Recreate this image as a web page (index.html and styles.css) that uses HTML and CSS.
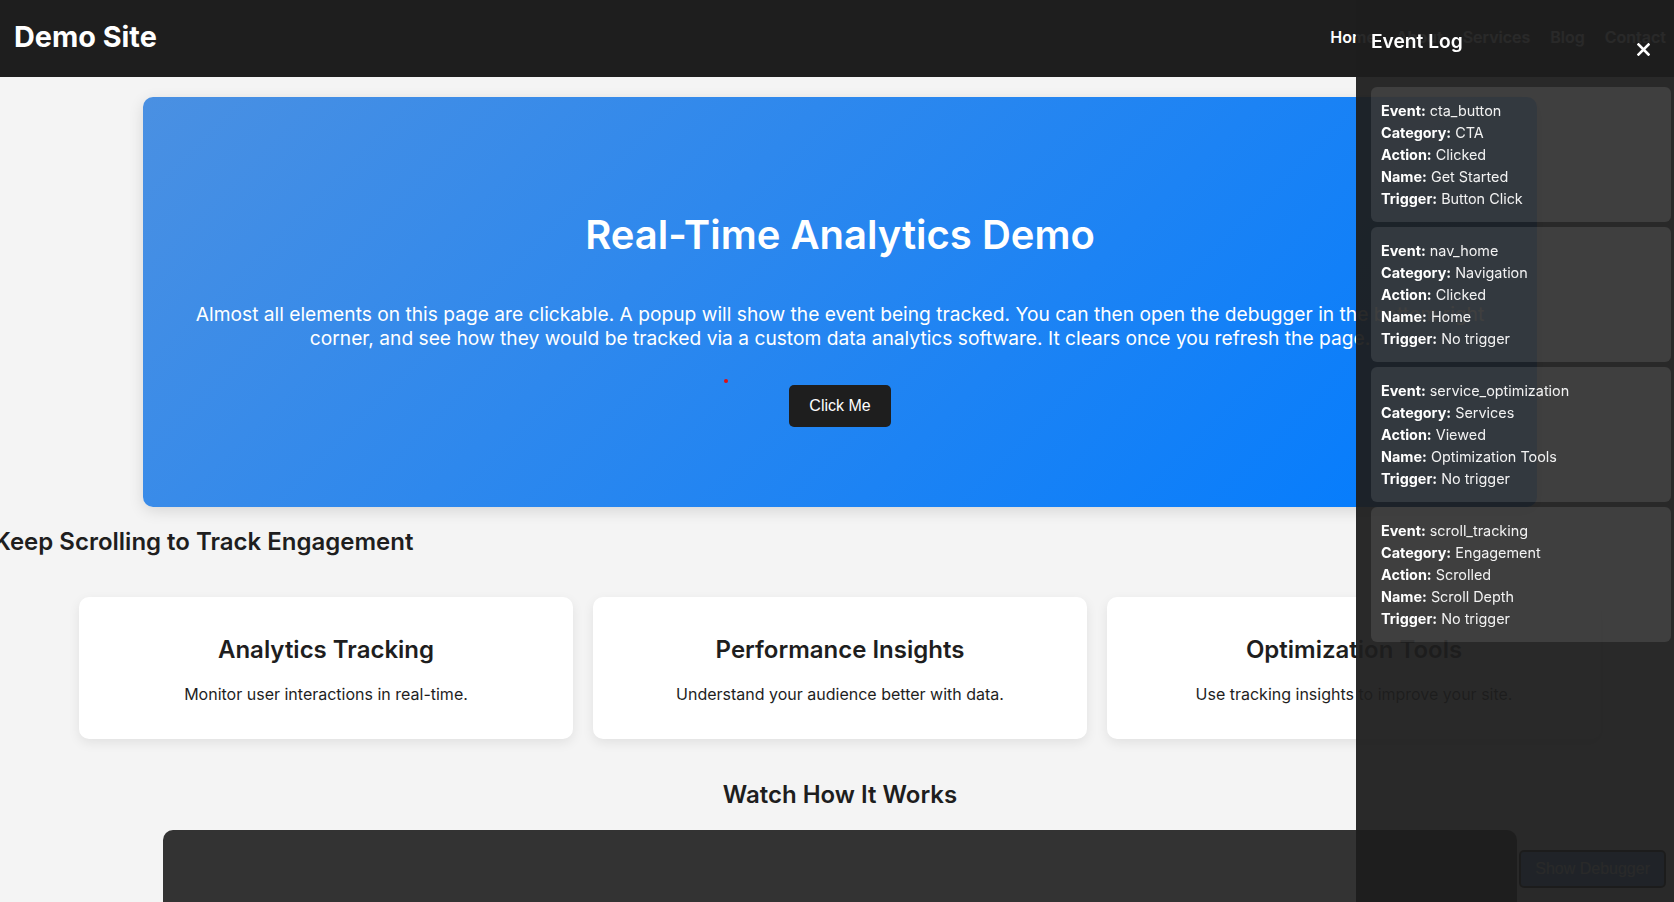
FILE: index.html
```html
<!DOCTYPE html>
<html lang="en">
<head>
<meta charset="utf-8">
<title>Demo Site</title>
<link rel="stylesheet" href="styles.css">
</head>
<body>
<div class="page">
  <header class="site-header">
    <div class="logo">Demo Site</div>
    <nav class="nav">
      <a href="#">Home</a>
      <a href="#">About</a>
      <a href="#">Services</a>
      <a href="#">Blog</a>
      <a href="#">Contact</a>
    </nav>
  </header>
  <main>
    <section class="hero">
      <h1>Real-Time Analytics Demo</h1>
      <p>Almost all elements on this page are clickable. A popup will show the event being tracked. You can then open the debugger in the bottom right corner, and see how they would be tracked via a custom data analytics software. It clears once you refresh the page.</p>
      <button class="cta">Click Me</button>
    </section>
    <h2 class="scroll-title">Keep Scrolling to Track Engagement</h2>
    <section class="features">
      <div class="feature">
        <h3>Analytics Tracking</h3>
        <p>Monitor user interactions in real-time.</p>
      </div>
      <div class="feature">
        <h3>Performance Insights</h3>
        <p>Understand your audience better with data.</p>
      </div>
      <div class="feature">
        <h3>Optimization Tools</h3>
        <p>Use tracking insights to improve your site.</p>
      </div>
    </section>
    <h2 class="video-title">Watch How It Works</h2>
    <div class="video"></div>
  </main>
</div>
<span class="click-dot"></span>
<button class="debug-toggle">Show Debugger</button>
<aside class="debugger">
  <h3 class="debugger-title">Event Log</h3>
  <button class="debugger-close" aria-label="Close">
    <svg width="13" height="13" viewBox="0 0 13 13"><path d="M1.5 1.5 L11.5 11.5 M11.5 1.5 L1.5 11.5" stroke="#fff" stroke-width="2.6" stroke-linecap="square"/></svg>
  </button>
  <div class="event">
    <div><b>Event:</b> cta_button</div>
    <div><b>Category:</b> CTA</div>
    <div><b>Action:</b> Clicked</div>
    <div><b>Name:</b> Get Started</div>
    <div><b>Trigger:</b> Button Click</div>
  </div>
  <div class="event">
    <div><b>Event:</b> nav_home</div>
    <div><b>Category:</b> Navigation</div>
    <div><b>Action:</b> Clicked</div>
    <div><b>Name:</b> Home</div>
    <div><b>Trigger:</b> No trigger</div>
  </div>
  <div class="event">
    <div><b>Event:</b> service_optimization</div>
    <div><b>Category:</b> Services</div>
    <div><b>Action:</b> Viewed</div>
    <div><b>Name:</b> Optimization Tools</div>
    <div><b>Trigger:</b> No trigger</div>
  </div>
  <div class="event">
    <div><b>Event:</b> scroll_tracking</div>
    <div><b>Category:</b> Engagement</div>
    <div><b>Action:</b> Scrolled</div>
    <div><b>Name:</b> Scroll Depth</div>
    <div><b>Trigger:</b> No trigger</div>
  </div>
</aside>
</body>
</html>
```
FILE: styles.css
```css
html, body {
  margin: 0;
  padding: 0;
  overflow: hidden;
  height: 100%;
}
body {
  background: #f4f4f4;
  font-family: Inter, "Noto Sans", sans-serif;
  color: #1e1e1e;
}
.page {
  width: 1680px;
}
.site-header {
  height: 77px;
  background: #1e1e1e;
  display: flex;
  align-items: center;
  justify-content: space-between;
  padding: 0 14px;
  box-sizing: border-box;
}
.logo {
  color: #fff;
  font-size: 28.8px;
  font-weight: 700;
  margin-top: -4px;
}
.nav {
  display: flex;
  gap: 20px;
  margin-top: -4px;
}
.nav a {
  color: #fff;
  text-decoration: none;
  font-size: 16px;
  font-weight: 600;
}
.hero {
  width: 1394px;
  box-sizing: border-box;
  margin: 20px auto 0;
  padding: 114px 50px 80px;
  border-radius: 10px;
  background: linear-gradient(135deg, #4a90e2, #007bff);
  box-shadow: 0 4px 15px rgba(0, 0, 0, 0.12);
  color: #fff;
  text-align: center;
}
.hero h1 {
  margin: 0 0 43px;
  font-size: 40px;
  line-height: 48px;
  font-weight: 600;
}
.hero p {
  margin: 0 0 35px;
  font-size: 19.2px;
  line-height: 24px;
}
.cta {
  font-family: "Liberation Sans", Arial, sans-serif;
  font-size: 16px;
  padding: 12px 20px;
  border: none;
  border-radius: 5px;
  background: #1e1e1e;
  color: #fff;
}
.scroll-title, .video-title {
  font-size: 24px;
  font-weight: 600;
  margin: 20px 0;
  line-height: 31px;
}
.scroll-title {
  margin-left: -6px;
  margin-top: 19px;
}
.video-title {
  text-align: center;
}
.features {
  display: flex;
  justify-content: center;
  gap: 20px;
  padding: 20px 0;
}
.feature {
  width: 494px;
  box-sizing: border-box;
  background: #fff;
  border-radius: 10px;
  box-shadow: 0 4px 12px rgba(0, 0, 0, 0.08);
  padding: 38px 20px 35px;
  text-align: center;
}
.feature h3 {
  margin: 0 0 21px;
  font-size: 24px;
  line-height: 29px;
  font-weight: 600;
}
.feature p {
  margin: 0;
  font-size: 16px;
  line-height: 19.4px;
}
.video {
  width: 1354px;
  height: 400px;
  margin: 0 auto;
  background: #333;
  border-radius: 10px;
}
.click-dot {
  position: absolute;
  left: 724px;
  top: 379px;
  width: 4px;
  height: 4px;
  border-radius: 50%;
  background: #e01010;
}
.debug-toggle {
  position: fixed;
  right: 8px;
  bottom: 14px;
  font-family: "Liberation Sans", Arial, sans-serif;
  font-size: 16px;
  padding: 8px 14px;
  border: 2px solid #111;
  border-radius: 5px;
  background: #4a90e2;
  color: #fff;
  z-index: 5;
}
.debugger {
  position: fixed;
  top: 0;
  right: -12px;
  width: 300px;
  height: 100%;
  padding: 15px;
  background: rgba(30, 30, 30, 0.95);
  color: #fff;
  z-index: 10;
}
.debugger-title {
  margin: 14px 0 34px;
  font-size: 19.2px;
  line-height: 24px;
  font-weight: 600;
}
.debugger-close {
  position: absolute;
  top: 43px;
  right: 36px;
  width: 13px;
  height: 13px;
  padding: 0;
  border: none;
  background: none;
  display: block;
}
.debugger-close svg {
  display: block;
}
.event {
  background: rgba(255, 255, 255, 0.1);
  border-radius: 6px;
  padding: 13px 10px 12px;
  margin-bottom: 5px;
  font-size: 14.4px;
  line-height: 22px;
  color: #f2f2f2;
}
.event b {
  font-weight: 700;
  color: #fff;
}
```
